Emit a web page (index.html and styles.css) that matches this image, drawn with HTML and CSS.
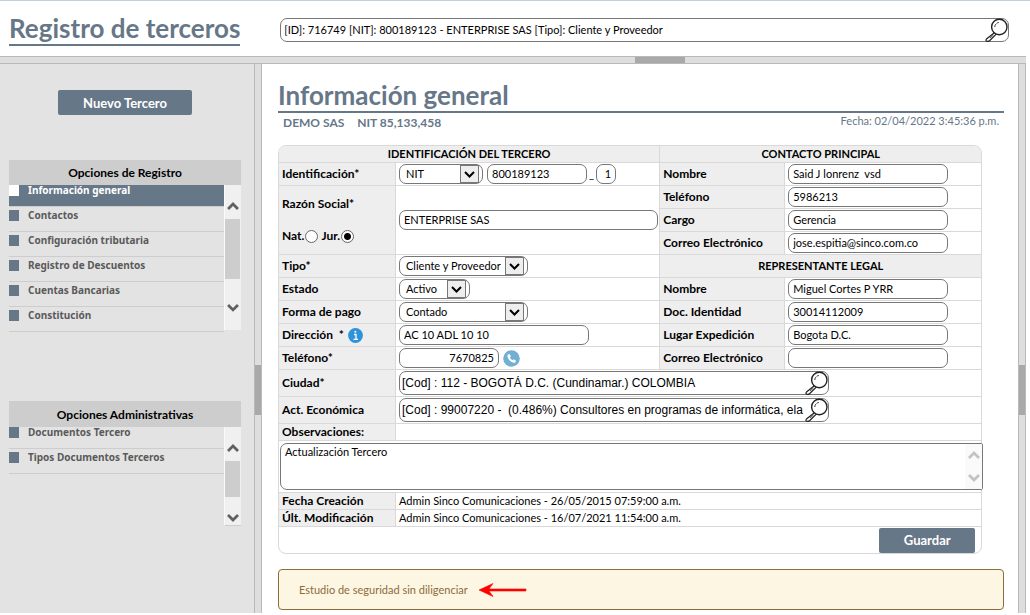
FILE: index.html
```html
<!DOCTYPE html>
<html lang="es">
<head>
<meta charset="utf-8">
<title>Registro de terceros</title>
<link rel="stylesheet" href="styles.css">
</head>
<body>
<svg class="defs" aria-hidden="true">
  <symbol id="lens" viewBox="0 0 24 24">
    <path d="M10.300 14 1.500 21Q.300 22.500 1.800 23.300 3.300 23.800 4.800 22.500L12 15.300" fill="#fff" stroke="#222" stroke-width="1.200"/>
    <path d="M5 20 8.500 17" stroke="#555" stroke-width="1" fill="none"/>
    <circle cx="14.300" cy="9" r="7.700" fill="#fff" stroke="#222" stroke-width="1.400"/>
    <path d="M9.800 9a4.500 4.500 0 0 1 4-4.500" fill="none" stroke="#333" stroke-width="1" stroke-dasharray="3 1"/>
  </symbol>
  <symbol id="up" viewBox="0 0 12 10"><path d="M1 8 6 3l5 5" fill="none" stroke="currentColor" stroke-width="2.800"/></symbol>
  <symbol id="down" viewBox="0 0 12 10"><path d="M1 2l5 5 5-5" fill="none" stroke="currentColor" stroke-width="2.800"/></symbol>
</svg>
<header class="top">
  <h1 class="brand">Registro de terceros</h1>
  <div class="lookup lookup-top">
    <input class="field" type="text" aria-label="Buscar tercero" value="[ID]: 716749 [NIT]: 800189123 - ENTERPRISE SAS [Tipo]: Cliente y Proveedor">
    <button class="lens" type="button" aria-label="Buscar"><svg><use href="#lens"/></svg></button>
  </div>
</header>
<div class="split split-h"><span class="grip"></span></div>
<div class="panes">
  <aside class="side">
    <button class="btn btn-new" type="button">Nuevo Tercero</button>
    <section class="menu menu-main">
      <h2>Opciones de Registro</h2>
      <div class="menu-body">
        <ul>
          <li class="active"><a href="#general">Información general</a></li>
          <li><a href="#contactos">Contactos</a></li>
          <li><a href="#tributaria">Configuración tributaria</a></li>
          <li><a href="#descuentos">Registro de Descuentos</a></li>
          <li><a href="#cuentas">Cuentas Bancarias</a></li>
          <li><a href="#constitucion">Constitución</a></li>
        </ul>
        <div class="bar"><svg><use href="#up"/></svg><span class="thumb"></span><svg><use href="#down"/></svg></div>
      </div>
    </section>
    <section class="menu menu-admin">
      <h2>Opciones Administrativas</h2>
      <div class="menu-body">
        <ul>
          <li class="cut"><a href="#documentos">Documentos Tercero</a></li>
          <li><a href="#tipos">Tipos Documentos Terceros</a></li>
        </ul>
        <div class="bar"><svg><use href="#up"/></svg><span class="thumb"></span><svg><use href="#down"/></svg></div>
      </div>
    </section>
  </aside>
  <div class="split split-v"><span class="grip"></span></div>
  <main class="main">
    <h2 class="title">Información general</h2>
    <div class="meta">
      <strong>DEMO SAS</strong><strong>NIT 85,133,458</strong>
      <span class="date">Fecha: 02/04/2022 3:45:36 p.m.</span>
    </div>
    <form>
    <table class="sheet">
      <colgroup><col class="c1"><col class="c2"><col class="c3"><col class="c4"></colgroup>
      <tr class="short"><th colspan="2" class="head">IDENTIFICACIÓN DEL TERCERO</th><th colspan="2" class="head">CONTACTO PRINCIPAL</th></tr>
      <tr>
        <th><label for="tipoid">Identificación*</label></th>
        <td><div class="line"><select id="tipoid" class="field w-nit"><option>NIT</option></select><input class="field w-100" type="text" aria-label="Número" value="800189123"><span class="dash">_</span><input class="field w-dv" type="text" aria-label="Dígito de verificación" value="1"></div></td>
        <th><label for="c-nombre">Nombre</label></th>
        <td><input id="c-nombre" class="field w-160" type="text" value="Said J lonrenz  vsd"></td>
      </tr>
      <tr>
        <th rowspan="3"><div class="social"><label for="razon">Razón Social*</label><div class="line kinds"><label for="nat">Nat.</label><input type="radio" name="kind" id="nat"><label for="jur">Jur.</label><input type="radio" name="kind" id="jur" checked></div></div></th>
        <td rowspan="3" class="wide"><input id="razon" class="field w-full" type="text" value="ENTERPRISE SAS"></td>
        <th><label for="c-tel">Teléfono</label></th>
        <td><input id="c-tel" class="field w-160" type="text" value="5986213"></td>
      </tr>
      <tr><th><label for="c-cargo">Cargo</label></th><td><input id="c-cargo" class="field w-160" type="text" value="Gerencia"></td></tr>
      <tr><th><label for="c-mail">Correo Electrónico</label></th><td><input id="c-mail" class="field w-160" type="text" value="jose.espitia@sinco.com.co"></td></tr>
      <tr>
        <th><label for="tipo">Tipo*</label></th>
        <td><select id="tipo" class="field w-tipo"><option>Cliente y Proveedor</option></select></td>
        <th colspan="2" class="head">REPRESENTANTE LEGAL</th>
      </tr>
      <tr>
        <th><label for="estado">Estado</label></th>
        <td><select id="estado" class="field w-estado"><option>Activo</option></select></td>
        <th><label for="r-nombre">Nombre</label></th>
        <td><input id="r-nombre" class="field w-160" type="text" value="Miguel Cortes P YRR"></td>
      </tr>
      <tr>
        <th><label for="pago">Forma de pago</label></th>
        <td><select id="pago" class="field w-tipo"><option>Contado</option></select></td>
        <th><label for="r-doc">Doc. Identidad</label></th>
        <td><input id="r-doc" class="field w-160" type="text" value="30014112009"></td>
      </tr>
      <tr>
        <th><div class="line"><label for="dir">Dirección &nbsp;*</label>
          <svg class="info" viewBox="0 0 15 15"><circle cx="7.500" cy="7.500" r="7.400" fill="#2f93dc"/><path d="M6 6.500h2v4.500M5.500 11.300h4.500" stroke="#fff" stroke-width="1.300" fill="none"/><circle cx="7.400" cy="3.800" r="1" fill="#fff"/></svg></div></th>
        <td><input id="dir" class="field w-190" type="text" value="AC 10 ADL 10 10"></td>
        <th><label for="r-lugar">Lugar Expedición</label></th>
        <td><input id="r-lugar" class="field w-160" type="text" value="Bogota D.C."></td>
      </tr>
      <tr>
        <th><label for="tel">Teléfono*</label></th>
        <td><div class="line"><input id="tel" class="field w-100 right" type="text" value="7670825">
          <svg class="phone" viewBox="0 0 17 17"><circle cx="8.500" cy="8.500" r="8.300" fill="#72b0d3"/><path d="M5.300 4.300 6.700 4l1.200 2.500-1 1.100c.500 1.200 1.300 2 2.500 2.600l1.200-1 2.300 1.300-.4 1.500c-.3.800-1.200 1-2 .8C7.500 12 5 9.500 4.500 6.300c-.1-.8.100-1.600.8-2z" fill="#fff"/></svg></div></td>
        <th><label for="r-mail">Correo Electrónico</label></th>
        <td><input id="r-mail" class="field w-160" type="text" value=""></td>
      </tr>
      <tr class="tall">
        <th><label for="ciudad">Ciudad*</label></th>
        <td colspan="3"><div class="lookup"><input id="ciudad" class="field arial" type="text" value="[Cod] : 112 - BOGOTÁ D.C. (Cundinamar.) COLOMBIA"><button class="lens" type="button" aria-label="Buscar ciudad"><svg><use href="#lens"/></svg></button></div></td>
      </tr>
      <tr class="tall">
        <th><label for="act">Act. Económica</label></th>
        <td colspan="3"><div class="lookup"><input id="act" class="field arial" type="text" value="[Cod] : 99007220 -  (0.486%) Consultores en programas de informática, ela"><button class="lens" type="button" aria-label="Buscar actividad"><svg><use href="#lens"/></svg></button></div></td>
      </tr>
      <tr class="short"><th><label for="obs">Observaciones:</label></th><td colspan="3"></td></tr>
      <tr class="notes"><td colspan="4"><div class="area"><textarea id="obs">Actualización Tercero</textarea><div class="area-bar"><svg><use href="#up"/></svg><svg><use href="#down"/></svg></div></div></td></tr>
      <tr class="short"><th>Fecha Creación</th><td colspan="3">Admin Sinco Comunicaciones - 26/05/2015 07:59:00 a.m.</td></tr>
      <tr class="short"><th>Últ. Modificación</th><td colspan="3">Admin Sinco Comunicaciones - 16/07/2021 11:54:00 a.m.</td></tr>
      <tr class="foot"><td colspan="4"><button class="btn btn-save" type="button">Guardar</button></td></tr>
    </table>
    </form>
    <div class="alert"><span>Estudio de seguridad sin diligenciar</span>
      <svg class="arrow" viewBox="0 0 48 14"><path d="M0 7 14 0.500 10 6h37v2H10l4 5.500z" fill="#f00" stroke="#f00" stroke-width=".6"/></svg></div>
  </main>
  <div class="split split-v"><span class="grip"></span></div>
</div>
</body>
</html>
```
FILE: styles.css
```css
* { box-sizing: border-box; }
body {
  margin: 0;
  height: 100vh;
  padding: 0 4px 2px 0;
  display: flex;
  flex-direction: column;
  overflow: hidden;
  background: #fff;
  color: #000;
  font: 12px/16px Lato, "Liberation Sans", sans-serif;
}
h1, h2, ul { margin: 0; padding: 0; }
.defs { display: none; }
button, input, select, textarea { font: inherit; color: inherit; margin: 0; }

.top {
  flex: 0 0 56px;
  display: flex;
  align-items: flex-start;
  gap: 40px;
  margin-right: -4px;
  padding: 11px 21px 0 9px;
  border-top: 1px solid #c3cde3;
}
.brand {
  color: #667788;
  border-bottom: 2px solid #667788;
  font-size: 26px;
  line-height: 32px;
  white-space: nowrap;
}
.lookup { position: relative; width: 430px; }
.lookup .field { width: 100%; height: 24px; padding-right: 24px; }
.lookup-top { flex: 1; margin-top: 6px; }
.lookup-top .field { padding-left: 3px; }
.lens {
  position: absolute;
  right: 0;
  top: 0;
  width: 24px;
  height: 24px;
  padding: 0;
  border: 0;
  background: none;
}
.lens svg { display: block; width: 24px; height: 24px; }

.split { background: #dedede; border: 0 solid #b9b9b9; display: flex; align-items: center; justify-content: center; }
.split-h { flex: 0 0 8px; border-width: 1px 0; padding-left: 294px; }
.split-h .grip { width: 50px; height: 6px; }
.split-v { border-width: 0 1px; padding-top: 102px; }
.split-v .grip { width: 6px; height: 50px; }
.grip { background: #a9a9a9; }

.panes { flex: 1; min-height: 0; display: grid; grid-template-columns: 254px 8px minmax(0, 1fr) 8px; }
.side { background: #e3e3e3; padding: 26px 13px 0 9px; display: flex; flex-direction: column; align-items: stretch; }
.btn {
  background: #667788;
  color: #fff;
  border: 0;
  border-radius: 2px;
  height: 25px;
  padding: 0;
  font-size: 13px;
  font-weight: 700;
}
.btn-new { width: 134px; align-self: center; }
.menu h2 { background: #cdcdcd; text-align: center; font-size: 12px; line-height: 25px; height: 25px; }
.menu-main { margin-top: 45px; }
.menu-admin { margin-top: 69px; }
.menu-admin h2 { height: 26px; line-height: 28px; }
.menu-body { display: flex; }
.menu ul { flex: 1; list-style: none; height: 147px; }
.menu li { height: 25px; border-bottom: 1px solid #cdcdcd; padding-top: 3px; }
.menu li a {
  display: flex;
  align-items: center;
  height: 11px;
  color: #5a5a5a;
  text-decoration: none;
  font: 700 10px/11px "Noto Sans", "DejaVu Sans", sans-serif;
}
.menu li a::before { content: ""; width: 10px; height: 11px; background: #667788; margin-right: 9px; }
.menu li.active, .menu li.cut { height: 22px; padding-top: 0; }
.menu li.active { background: #667788; }
.menu li.active a { color: #fff; }
.menu li.active a::before { background: #fff; }
.bar {
  width: 17px;
  height: 145px;
  background: #f0f0f0;
  border-left: 1px solid #fafafa;
  color: #606060;
  display: flex;
  flex-direction: column;
  align-items: center;
  padding: 16px 1px 17px 0;
}
.bar svg { width: 12px; height: 10px; }
.thumb { width: 15px; height: 61px; margin: 8px 0 24px; background: #cdcdcd; }
.menu-admin .bar { height: 99px; padding-bottom: 2px; border-bottom: 1px solid #cdcdcd; }
.menu-admin .thumb { height: 36px; margin-bottom: 16px; }

.main { padding: 15px 14px 0 16px; overflow: hidden; }
.title { color: #667788; border-bottom: 2px solid #667788; font-size: 26px; line-height: 32px; }
.meta { display: flex; gap: 13px; padding: 0 5px; height: 32px; color: #667788; }
.meta strong { line-height: 20px; font-size: 12px; }
.date { margin-left: auto; line-height: 15px; font-size: 11px; }

.sheet {
  width: 97%;
  table-layout: fixed;
  border-spacing: 0;
  border: 1px solid #d9d9d9;
  border-radius: 8px;
}
.c1 { width: 117px; }
.c3 { width: 125px; }
.c4 { width: 196px; }
.sheet th, .sheet td {
  height: 23px;
  padding: 0 3px;
  border: 0 solid #d9d9d9;
  border-width: 0 1px 1px 0;
  text-align: left;
  font-size: 11px;
  line-height: 16px;
  white-space: nowrap;
}
.sheet th { background: #eee; font-size: 12px; }
.sheet th.head { text-align: center; font-size: 11px; }
.sheet td.wide { padding-right: 1px; }
.sheet tr > td:last-child, .sheet tr > .head:last-child { border-right: 0; }
.sheet tr.short > * { height: 17px; }
.sheet tr.tall > * { height: 27px; }
.sheet tr.foot > * { height: 26px; border-bottom: 0; padding: 0 6px 0 0; }
.sheet tr.notes > * { height: 52px; padding: 0 0 0 1px; }
.sheet tr:first-child > :first-child { border-top-left-radius: 7px; }
.sheet tr:first-child > :last-child { border-top-right-radius: 7px; }
.line { display: flex; align-items: center; gap: 4px; }
.field {
  display: block;
  height: 20px;
  padding: 0 4px 1px;
  border: 1px solid #777;
  border-radius: 7px;
  background: #fff;
  font-size: 11px;
  line-height: 16px;
}
.arial { font: 12px/16px "Liberation Sans", Arial, sans-serif; padding-left: 2px; }
select.field {
  appearance: none;
  padding: 0 6px;
  background: #fff url("data:image/svg+xml,%3Csvg xmlns='http://www.w3.org/2000/svg' width='20' height='18'%3E%3Crect x='.5' y='.5' width='18' height='17' fill='%23eee' stroke='%23777'/%3E%3Cpath d='M5 7l4.500 4.500L14 7' fill='none' stroke='%23000' stroke-width='2'/%3E%3C/svg%3E") no-repeat right 2px center;
}
.w-nit { width: 84px; }
.w-100 { width: 100px; }
.w-dv { width: 20px; text-align: right; }
.w-160 { width: 160px; }
.w-190 { width: 190px; }
.w-full { width: 100%; }
.w-tipo { width: 129px; }
.w-estado { width: 71px; }
.right { text-align: right; }
.dash { margin: 0 -2px; }
.social { display: flex; flex-direction: column; gap: 16px; }
.kinds { gap: 0; }
.kinds input {
  appearance: none;
  width: 13px;
  height: 13px;
  margin: 0 3px 0 1px;
  border: 1px solid #666;
  border-radius: 50%;
  background: #fff;
}
.kinds input:checked { background: radial-gradient(#000 0 3px, #fff 4px); }
.info { width: 15px; height: 15px; }
.phone { width: 17px; height: 17px; }
.area { position: relative; height: 47px; margin-right: -2px; }
.area textarea {
  display: block;
  width: 100%;
  height: 100%;
  padding: 0 4px;
  border: 1px solid #777;
  border-radius: 7px 2px 2px 7px;
  resize: none;
  overflow: hidden;
  font-size: 11px;
  line-height: 16px;
}
.area-bar {
  position: absolute;
  inset: 1px 1px 1px auto;
  width: 17px;
  background: #fafafa;
  color: #c3c3c3;
  display: flex;
  flex-direction: column;
  align-items: center;
  justify-content: space-between;
  padding: 6px 0;
}
.area-bar svg { width: 12px; height: 10px; }
.btn-save { display: block; width: 96px; margin-left: auto; }

.alert {
  display: flex;
  align-items: center;
  gap: 11px;
  height: 41px;
  margin-top: 15px;
  padding: 0 20px;
  border: 1px solid #8a6d3b;
  border-radius: 4px;
  background: #fdf6e3;
  color: #8a6d3b;
  font-size: 11px;
}
.arrow { width: 48px; height: 14px; }
```
